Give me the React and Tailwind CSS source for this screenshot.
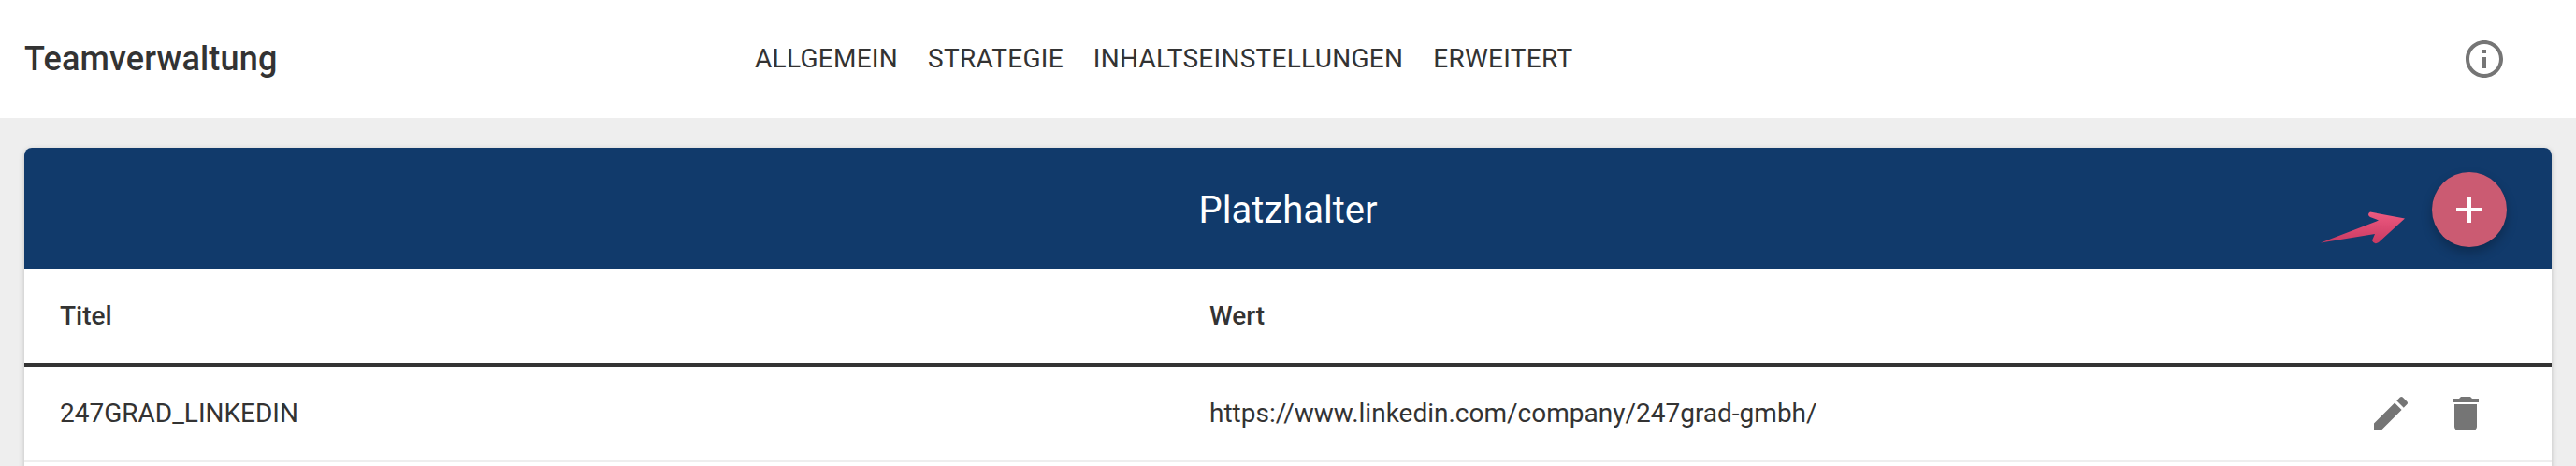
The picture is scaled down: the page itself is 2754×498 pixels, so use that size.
function MIcon({ d, className }) {
  return (
    <svg viewBox="0 0 24 24" className={className} fill="currentColor">
      <path d={d} />
    </svg>
  );
}

export default function App() {
  return (
    <div className="h-[498px] w-[2754px] overflow-hidden bg-[#eeeeee] font-['Roboto',sans-serif] text-[#333333]">
      <header className="flex h-[126px] items-center bg-white pl-[26px]">
        <h1 className="w-[781px] text-[36px] leading-none font-medium tracking-[0.005em]">Teamverwaltung</h1>
        <nav className="flex gap-[32px] text-[28px] leading-none tracking-[0.01em]">
          <span>ALLGEMEIN</span>
          <span>STRATEGIE</span>
          <span>INHALTSEINSTELLUNGEN</span>
          <span>ERWEITERT</span>
        </nav>
        <div className="ml-auto mr-[74px] text-[#757575]">
          <MIcon className="block h-[48px] w-[48px]" d="M11 7h2v2h-2zm0 4h2v6h-2zm1-9C6.48 2 2 6.48 2 12s4.48 10 10 10 10-4.48 10-10S17.52 2 12 2zm0 18c-4.41 0-8-3.59-8-8s3.59-8 8-8 8 3.59 8 8-3.59 8-8 8z" />
        </div>
      </header>
      <main className="px-[26px] pt-[32px]">
        <section className="rounded-[8px] bg-white shadow-[0_2px_6px_rgba(0,0,0,0.2)]">
          <div className="relative flex h-[130px] items-center justify-center rounded-t-[8px] bg-[#113a6b] pt-[4px]">
            <h2 className="text-[40px] font-normal leading-none text-white">Platzhalter</h2>
            <svg className="absolute left-[2455px] top-[68px] h-[36px] w-[90px]" viewBox="0 0 90 36">
              <defs>
                <linearGradient id="arrow" x1="0" y1="0" x2="0" y2="1">
                  <stop offset="0" stopColor="#ee5a80" />
                  <stop offset="1" stopColor="#c93a62" />
                </linearGradient>
              </defs>
              <path d="M0 33.5 L62 9.5 L53 6 Q49 3 53 0.5 L90 7.5 L62 33 Q57 36 55 31 L58 24 Z" fill="url(#arrow)" />
            </svg>
            <button className="absolute left-[2574px] top-[26px] flex h-[80px] w-[80px] items-center justify-center rounded-full bg-[#cb5b72] shadow-[0_6px_12px_rgba(0,0,0,0.25)]">
              <svg viewBox="0 0 28 28" className="h-[28px] w-[28px]" fill="#ffffff">
                <path d="M12 0h4v12h12v4H16v12h-4V16H0v-4h12z" />
              </svg>
            </button>
          </div>
          <div className="grid h-[104px] grid-cols-[1229px_1fr] items-center border-b-4 border-[#333333] pl-[38px] text-[28px] font-medium leading-none">
            <span>Titel</span>
            <span>Wert</span>
          </div>
          <div className="grid h-[102px] grid-cols-[1229px_1fr_auto] items-center border-b-2 border-[#eeeeee] pl-[38px] text-[28px] leading-none">
            <span>247GRAD_LINKEDIN</span>
            <span>https://www.linkedin.com/company/247grad-gmbh/</span>
            <div className="flex gap-[32px] pr-[68px] text-[#757575]">
              <MIcon className="block h-[48px] w-[48px]" d="M3 17.25V21h3.75L17.81 9.94l-3.75-3.75L3 17.25zM20.71 7.04c.39-.39.39-1.02 0-1.41l-2.34-2.34c-.39-.39-1.02-.39-1.41 0l-1.83 1.83 3.75 3.75 1.83-1.83z" />
              <MIcon className="block h-[48px] w-[48px]" d="M6 19c0 1.1.9 2 2 2h8c1.1 0 2-.9 2-2V7H6v12zM19 4h-3.5l-1-1h-5l-1 1H5v2h14V4z" />
            </div>
          </div>
          <div className="h-[60px]" />
        </section>
      </main>
    </div>
  );
}
